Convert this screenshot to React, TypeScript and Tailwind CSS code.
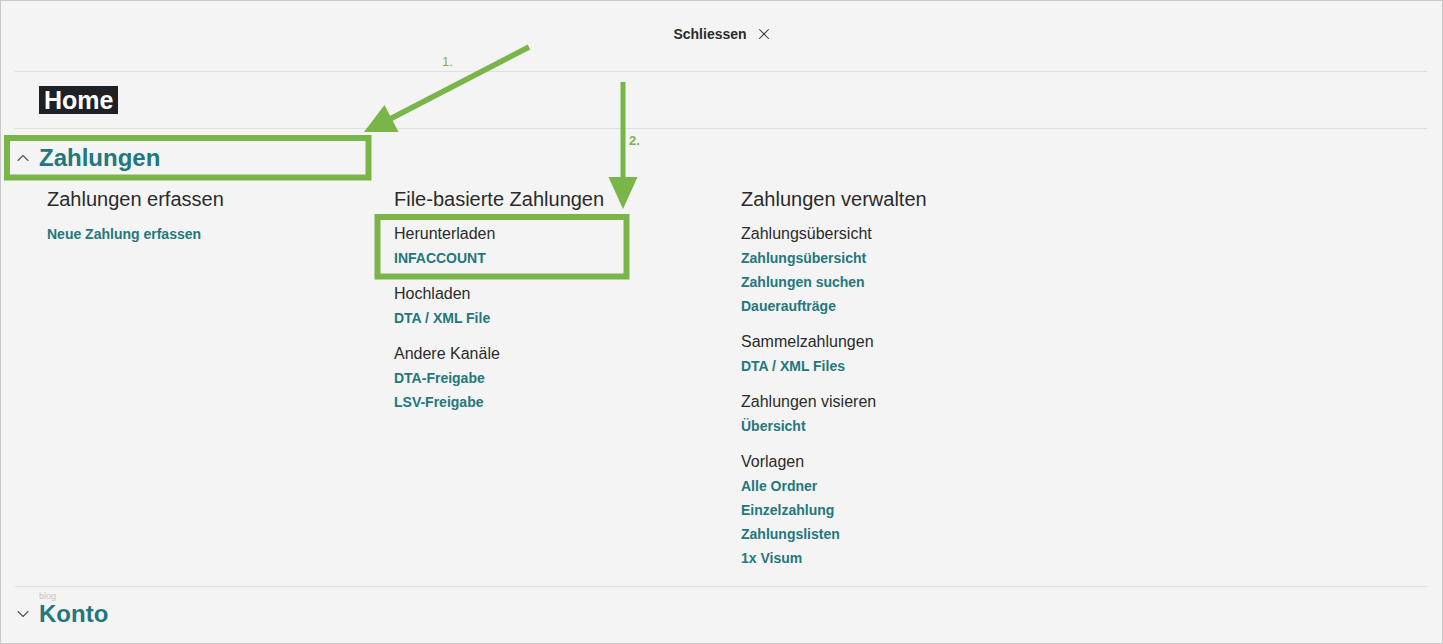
import { ChevronDown, ChevronUp, X } from 'lucide-react';

interface Group {
  title: string;
  links: string[];
}

interface Column {
  heading: string;
  groups: Group[];
}

const columns: Column[] = [
  {
    heading: 'Zahlungen erfassen',
    groups: [{ title: '', links: ['Neue Zahlung erfassen'] }],
  },
  {
    heading: 'File-basierte Zahlungen',
    groups: [
      { title: 'Herunterladen', links: ['INFACCOUNT'] },
      { title: 'Hochladen', links: ['DTA / XML File'] },
      { title: 'Andere Kanäle', links: ['DTA-Freigabe', 'LSV-Freigabe'] },
    ],
  },
  {
    heading: 'Zahlungen verwalten',
    groups: [
      {
        title: 'Zahlungsübersicht',
        links: ['Zahlungsübersicht', 'Zahlungen suchen', 'Daueraufträge'],
      },
      { title: 'Sammelzahlungen', links: ['DTA / XML Files'] },
      { title: 'Zahlungen visieren', links: ['Übersicht'] },
      {
        title: 'Vorlagen',
        links: ['Alle Ordner', 'Einzelzahlung', 'Zahlungslisten', '1x Visum'],
      },
    ],
  },
];

function Annotations() {
  // green markers drawn over the menu
  return (
    <svg
      className="pointer-events-none absolute left-0 top-0"
      width={1443}
      height={644}
      viewBox="0 0 1443 644"
    >
      <g fill="none" stroke="#79b548" strokeWidth={6}>
        <rect x={6} y={137} width={361.5} height={39.5} />
        <rect x={376.5} y={216} width={249} height={59.5} />
        <line x1={528} y1={46} x2={388} y2={118.5} strokeWidth={5.5} />
        <line x1={622} y1={81} x2={622} y2={180} strokeWidth={5} />
      </g>
      <g fill="#79b548">
        <polygon points="363,131 383.5,104 397.5,131" />
        <polygon points="607.5,176 636.5,176 622,208" />
      </g>
    </svg>
  );
}

export default function App() {
  return (
    <div
      className="relative h-[644px] w-[1443px] overflow-hidden border border-[#c9c9c9] bg-[#f4f4f4] text-[#2b2b2b]"
      style={{ fontFamily: '"Liberation Sans", Arial, sans-serif' }}
    >
      <div className="ml-[14px] mr-[15px]">
        <div className="flex h-[71px] items-center justify-center border-b border-[#dedede] pb-[4px] pl-[4px]">
          <button className="flex items-center gap-[8px] text-[14px] font-bold text-[#2b2b2b]">
            Schliessen
            <X size={18} strokeWidth={1.4} className="text-[#333]" />
          </button>
        </div>

        <div className="flex h-[57px] items-center border-b border-[#dedede] pl-[24px]">
          <span className="inline-flex h-[28px] items-center bg-[#1e2226] px-[5px] text-[25px] font-bold leading-none text-white">
            Home
          </span>
        </div>

        <div className="border-b border-[#dedede] pb-[16px]">
          <div className="mt-[13px] flex h-[32px] items-center">
            <ChevronUp size={20} strokeWidth={1.3} className="-ml-[2px] text-[#555]" />
            <span className="ml-[6px] text-[24px] font-bold text-[#23777d]">
              Zahlungen
            </span>
          </div>

          <div className="mt-[11px] flex pl-[32px]">
            {columns.map((col) => (
              <div key={col.heading} className="w-[347px]">
                <h3 className="text-[20px] leading-[28px] text-[#2b2b2b]">
                  {col.heading}
                </h3>
                <div className="mt-[9px]">
                  {col.groups.map((group, i) => (
                    <div
                      key={group.title + i}
                      className={i > 0 ? 'mt-[12px]' : ''}
                    >
                      {group.title && (
                        <p className="text-[16px] leading-[24px] text-[#2b2b2b]">
                          {group.title}
                        </p>
                      )}
                      {group.links.map((link) => (
                        <a
                          key={link}
                          className="block text-[14px] font-bold leading-[24px] text-[#23777d]"
                        >
                          {link}
                        </a>
                      ))}
                    </div>
                  ))}
                </div>
              </div>
            ))}
          </div>
        </div>

        <div className="relative flex h-[54px] items-center">
          <span className="absolute left-[24px] top-[5px] text-[9px] leading-none text-[#c4c4c4]">
            blog
          </span>
          <ChevronDown size={20} strokeWidth={1.3} className="-ml-[2px] text-[#555]" />
          <span className="ml-[6px] text-[24px] font-bold leading-[18px] text-[#23777d]">
            Konto
          </span>
        </div>
      </div>

      <span className="absolute left-[441px] top-[51px] text-[13px] text-[#79b548]">
        1.
      </span>
      <span className="absolute left-[628px] top-[130px] text-[13px] font-bold text-[#79b548]">
        2.
      </span>
      <Annotations />
    </div>
  );
}
